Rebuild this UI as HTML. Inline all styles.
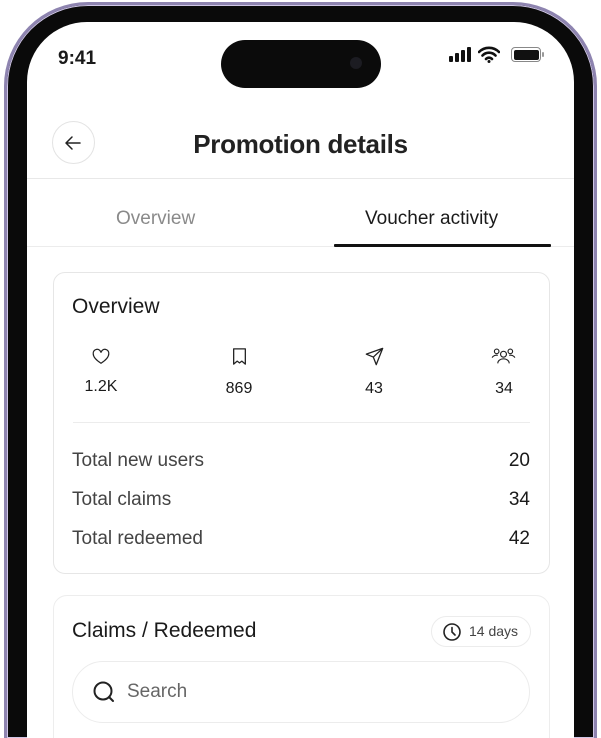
<!DOCTYPE html>
<html style="width:601px;height:738px;overflow:hidden"><head><meta charset="utf-8"><style>
*{margin:0;padding:0;box-sizing:border-box}
body{width:601px;height:738px;overflow:hidden;background:#fff;font-family:"Liberation Sans",sans-serif;color:#1a1a1a;position:relative}
.frame{position:absolute;left:4px;top:2px;width:593px;height:900px;border-radius:84px;background:#0a0a0a;border:3px solid #8e84b0;box-shadow:inset 0 0 0 1px #cfc6e6}
.screen{position:absolute;left:27px;top:22px;width:547px;height:716px;border-radius:60px 60px 0 0;background:#fff;overflow:hidden}
.abs{position:absolute}
.t{position:absolute;white-space:nowrap}
</style></head><body>
<div class="frame" style="height:736px;border-bottom:none;border-radius:84px 84px 0 0"></div>
<div class="screen">
 <div class="t" style="left:31px;top:26px;font-size:19px;font-weight:bold">9:41</div>
 <div class="abs" style="left:194px;top:18px;width:160px;height:48px;border-radius:24px;background:#0b0b0b"></div>
 <div class="abs" style="left:323px;top:35px;width:12px;height:12px;border-radius:6px;background:#1c1c22"></div>
 <div class="abs" style="left:422px;top:34px;width:4px;height:6px;background:#111;border-radius:1px"></div>
 <div class="abs" style="left:428px;top:31px;width:4px;height:9px;background:#111;border-radius:1px"></div>
 <div class="abs" style="left:434px;top:28px;width:4px;height:12px;background:#111;border-radius:1px"></div>
 <div class="abs" style="left:440px;top:25px;width:4px;height:15px;background:#111;border-radius:1px"></div>
 <svg class="abs" style="left:451px;top:24px" width="22" height="17" viewBox="0 0 22 17"><path d="M1 6a14 14 0 0 1 20 0M4.5 9.5a9 9 0 0 1 13 0M8 13a4 4 0 0 1 6 0" stroke="#111" stroke-width="2.6" fill="none" stroke-linecap="round"/><circle cx="11" cy="15.5" r="1.5" fill="#111"/></svg>
 <div class="abs" style="left:484px;top:25px;width:30px;height:15px;border-radius:4px;border:1.5px solid #888;padding:1.5px"><div style="width:100%;height:100%;background:#111;border-radius:2px"></div></div>
 <div class="abs" style="left:515px;top:30px;width:2px;height:5px;background:#999;border-radius:1px"></div>

 <div class="abs" style="left:25px;top:99px;width:43px;height:43px;border-radius:50%;border:1px solid #e3e3e3"></div>
 <svg class="abs" style="left:36px;top:111px" width="20" height="20" viewBox="0 0 20 20"><path d="M17 10H3M9 4L3 10l6 6" stroke="#222" stroke-width="1.5" fill="none" stroke-linecap="round" stroke-linejoin="round"/></svg>
 <div class="t" style="left:0;width:547px;text-align:center;top:107px;font-size:26px;font-weight:bold;letter-spacing:-0.3px;color:#222">Promotion details</div>
 <div class="abs" style="left:0;top:156px;width:547px;height:1px;background:#e8e8e8"></div>
 <div class="t" style="left:89px;top:186px;font-size:19px;color:#8a8a8a">Overview</div>
 <div class="t" style="left:338px;top:186px;font-size:19px;color:#1a1a1a">Voucher activity</div>
 <div class="abs" style="left:0;top:224px;width:547px;height:1px;background:#ececec"></div>
 <div class="abs" style="left:307px;top:222px;width:217px;height:3px;background:#111;border-radius:1px"></div>

 <div class="abs" style="left:26px;top:250px;width:497px;height:302px;border:1px solid #e6e6e6;border-radius:12px"></div>
 <div class="t" style="left:45px;top:273px;font-size:21px">Overview</div>
 <svg class="abs" style="left:64px;top:324px" width="20" height="20" viewBox="0 0 18 18"><path d="M9 15.5C5 13 2 10.5 2 7a3.5 3.5 0 0 1 7-1 3.5 3.5 0 0 1 7 1c0 3.5-3 6-7 8.5z" stroke="#222" stroke-width="1.1" fill="none"/></svg>
 <svg class="abs" style="left:202px;top:324px" width="21" height="21" viewBox="0 0 18 18"><path d="M4 2.5h10v13l-3-2.5-2 1.5-2-1.5-3 2.5z" stroke="#222" stroke-width="1.1" fill="none" stroke-linejoin="round"/></svg>
 <svg class="abs" style="left:337px;top:324px" width="21" height="21" viewBox="0 0 18 18"><path d="M16 2L2 7l6 2.5L10.5 16z M8 9.5L16 2" stroke="#222" stroke-width="1.1" fill="none" stroke-linejoin="round"/></svg>
 <svg class="abs" style="left:464px;top:324px" width="25" height="21" viewBox="0 0 22 18"><circle cx="11" cy="7" r="2.6" stroke="#222" stroke-width="1" fill="none"/><path d="M6 15a5 4 0 0 1 10 0" stroke="#222" stroke-width="1" fill="none"/><circle cx="5" cy="4.5" r="2" stroke="#222" stroke-width="1" fill="none"/><circle cx="17" cy="4.5" r="2" stroke="#222" stroke-width="1" fill="none"/><path d="M1 10a4 3 0 0 1 5-2M21 10a4 3 0 0 0-5-2" stroke="#222" stroke-width="1" fill="none"/></svg>
 <div class="t" style="left:44px;width:60px;text-align:center;top:356px;font-size:16px">1.2K</div>
 <div class="t" style="left:182px;width:60px;text-align:center;top:358px;font-size:16px">869</div>
 <div class="t" style="left:317px;width:60px;text-align:center;top:358px;font-size:16px">43</div>
 <div class="t" style="left:447px;width:60px;text-align:center;top:358px;font-size:16px">34</div>
 <div class="abs" style="left:46px;top:400px;width:457px;height:1px;background:#ececec"></div>
 <div class="t" style="left:45px;top:428px;font-size:19px;color:#444">Total new users</div>
 <div class="t" style="left:45px;top:467px;font-size:19px;color:#444">Total claims</div>
 <div class="t" style="left:45px;top:506px;font-size:19px;color:#444">Total redeemed</div>
 <div class="t" style="right:44px;top:428px;font-size:19px">20</div>
 <div class="t" style="right:44px;top:467px;font-size:19px">34</div>
 <div class="t" style="right:44px;top:506px;font-size:19px">42</div>

 <div class="abs" style="left:26px;top:573px;width:497px;height:300px;border:1px solid #ededed;border-radius:14px"></div>
 <div class="t" style="left:45px;top:597px;font-size:21px">Claims / Redeemed</div>
 <div class="abs" style="left:404px;top:594px;width:100px;height:31px;border:1px solid #ececec;border-radius:16px"></div>
 <svg class="abs" style="left:415px;top:600px" width="20" height="20" viewBox="0 0 20 20"><circle cx="10" cy="10" r="8" stroke="#222" stroke-width="1.6" fill="none"/><path d="M10 5.5V10l3 3" stroke="#222" stroke-width="1.6" fill="none" stroke-linecap="round"/></svg>
 <div class="t" style="left:442px;top:601px;font-size:14px;color:#444">14 days</div>
 <div class="abs" style="left:45px;top:639px;width:458px;height:62px;border:1px solid #ececec;border-radius:31px"></div>
 <svg class="abs" style="left:65px;top:658px" width="24" height="24" viewBox="0 0 24 24"><circle cx="11" cy="11" r="8.5" stroke="#222" stroke-width="2" fill="none"/><path d="M17 17l4 4" stroke="#222" stroke-width="2" stroke-linecap="round"/></svg>
 <div class="t" style="left:100px;top:659px;font-size:19px;color:#666">Search</div>
</div>
</body></html>
